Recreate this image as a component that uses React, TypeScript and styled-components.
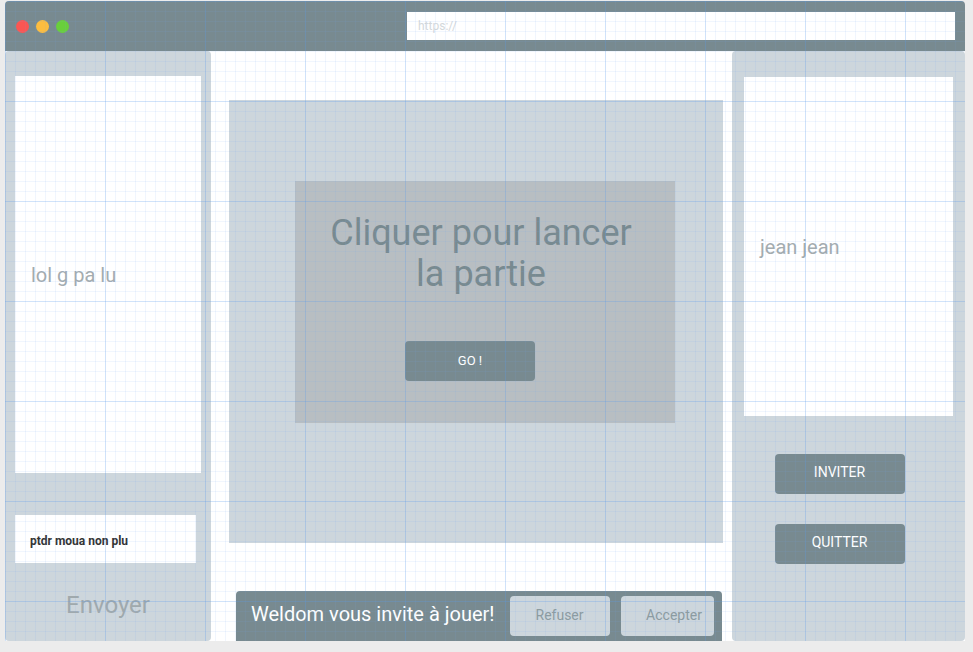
import React from "react";
import styled, { createGlobalStyle } from "styled-components";

const Global = createGlobalStyle`
  html, body { margin: 0; padding: 0; background: #ececec; }
  body { font-family: Roboto, "Liberation Sans", sans-serif; }
  * { box-sizing: border-box; }
`;

const Page = styled.div`
  width: 973px;
  height: 652px;
  padding: 1px 8px 0 5px;
`;

const Frame = styled.div`
  position: relative;
  width: 960px;
  height: 640px;
  background: #ffffff;
  border-radius: 4px 4px 0 0;
  overflow: hidden;
  display: flex;
  flex-direction: column;
`;

const GridOverlay = styled.div`
  position: absolute;
  inset: 0;
  pointer-events: none;
  background-image:
    linear-gradient(to right, rgba(80, 150, 235, 0.2) 1px, transparent 1px),
    linear-gradient(to bottom, rgba(80, 150, 235, 0.2) 1px, transparent 1px),
    linear-gradient(to right, rgba(110, 165, 245, 0.1) 1px, transparent 1px),
    linear-gradient(to bottom, rgba(110, 165, 245, 0.1) 1px, transparent 1px);
  background-size: 100px 100px, 100px 100px, 10px 10px, 10px 10px;
  background-position: 0 0;
`;

const Toolbar = styled.div`
  height: 50px;
  flex: none;
  background: #788a90;
  display: flex;
  align-items: center;
  padding: 0 10px 0 11px;
`;

const Lights = styled.div`
  display: flex;
  gap: 7px;
  margin-top: 1px;
`;

const Light = styled.span<{ $c: string }>`
  width: 13px;
  height: 13px;
  border-radius: 50%;
  background: ${(p) => p.$c};
`;

const UrlBar = styled.div`
  margin-left: auto;
  width: 548px;
  height: 28px;
  background: #ffffff;
  display: flex;
  align-items: center;
  padding-left: 11px;
  font-size: 12px;
  color: #d3d8db;
`;

const Body = styled.div`
  flex: 1;
  display: flex;
  min-height: 0;
`;

const Side = styled.div<{ $w: number }>`
  width: ${(p) => p.$w}px;
  flex: none;
  background: #cdd6dc;
  border-radius: 4px;
  display: flex;
  flex-direction: column;
`;

const LeftSide = styled(Side)`
  padding: 25px 10px 0 10px;
`;

const RightSide = styled(Side)`
  padding: 26px 12px 0 12px;
  align-items: center;
`;

const ListBox = styled.div<{ $h: number }>`
  align-self: stretch;
  height: ${(p) => p.$h}px;
  background: #ffffff;
  display: flex;
  align-items: center;
  padding-left: 16px;
  font-size: 20px;
  color: #a4acaf;
`;

const Input = styled.div`
  margin-top: 42px;
  width: 181px;
  height: 48px;
  background: #ffffff;
  display: flex;
  align-items: center;
  padding: 3px 0 0 15px;
  font-size: 12px;
  font-weight: 700;
  color: #333333;
`;

const SendLabel = styled.div`
  margin-top: 28px;
  text-align: center;
  font-size: 24px;
  color: #a0a9ac;
`;

const Middle = styled.div`
  flex: 1;
  display: flex;
  flex-direction: column;
  padding: 49px 0 0 18px;
`;

const GamePanel = styled.div`
  width: 494px;
  height: 443px;
  background: #cdd6dc;
  padding: 81px 0 0 66px;
`;

const Launcher = styled.div`
  width: 380px;
  height: 242px;
  background: #b8bec2;
  display: flex;
  flex-direction: column;
  padding-top: 32px;
`;

const Title = styled.div`
  text-align: center;
  padding-right: 8px;
  font-size: 36px;
  line-height: 41px;
  color: #788a90;
`;

const ActionButton = styled.button<{ $ml?: number }>`
  width: 130px;
  height: 40px;
  border: none;
  border-radius: 4px;
  background: #788a90;
  color: #ffffff;
  font-family: Roboto, "Liberation Sans", sans-serif;
  font-size: 13px;
  margin-left: ${(p) => p.$ml ?? 0}px;
  padding: 0 0 2px 0;
  cursor: pointer;
`;

const GoButton = styled(ActionButton)`
  margin-top: 46px;
`;

const SideButton = styled(ActionButton)<{ $mt: number }>`
  margin-top: ${(p) => p.$mt}px;
  margin-left: -18px;
  font-size: 14px;
  padding-bottom: 4px;
`;

const Notice = styled.div`
  margin: 48px 0 0 7px;
  width: 486px;
  height: 50px;
  background: #788a90;
  border-radius: 4px 4px 0 0;
  display: flex;
  align-items: center;
  padding: 0 8px 0 15px;
`;

const NoticeText = styled.div`
  flex: none;
  white-space: nowrap;
  font-size: 20px;
  color: #ffffff;
  margin-top: -4px;
`;

const NoticeButton = styled.button<{ $w: number; $gap: number; $pl?: number }>`
  flex: none;
  width: ${(p) => p.$w}px;
  height: 40px;
  margin-left: ${(p) => p.$gap}px;
  border: none;
  border-radius: 4px;
  background: #cdd6dc;
  color: #8b9ba1;
  font-family: Roboto, "Liberation Sans", sans-serif;
  font-size: 14px;
  padding: 0 0 2px ${(p) => p.$pl ?? 0}px;
`;

export default function App() {
  return (
    <>
      <Global />
      <Page>
        <Frame>
          <Toolbar>
            <Lights>
              <Light $c="#fc5652" />
              <Light $c="#fdbd3f" />
              <Light $c="#69cf3b" />
            </Lights>
            <UrlBar>https://</UrlBar>
          </Toolbar>
          <Body>
            <LeftSide $w={206}>
              <ListBox $h={397}>lol g pa lu</ListBox>
              <Input>ptdr moua non plu</Input>
              <SendLabel>Envoyer</SendLabel>
            </LeftSide>
            <Middle>
              <GamePanel>
                <Launcher>
                  <Title>
                    Cliquer pour lancer
                    <br />
                    la partie
                  </Title>
                  <GoButton $ml={110}>GO !</GoButton>
                </Launcher>
              </GamePanel>
              <Notice>
                <NoticeText>Weldom vous invite à jouer!</NoticeText>
                <NoticeButton $w={100} $gap={15}>Refuser</NoticeButton>
                <NoticeButton $w={93} $gap={11} $pl={14}>Accepter</NoticeButton>
              </Notice>
            </Middle>
            <RightSide $w={233}>
              <ListBox $h={339}>jean jean</ListBox>
              <SideButton $mt={38}>INVITER</SideButton>
              <SideButton $mt={30}>QUITTER</SideButton>
            </RightSide>
          </Body>
          <GridOverlay />
        </Frame>
      </Page>
    </>
  );
}
